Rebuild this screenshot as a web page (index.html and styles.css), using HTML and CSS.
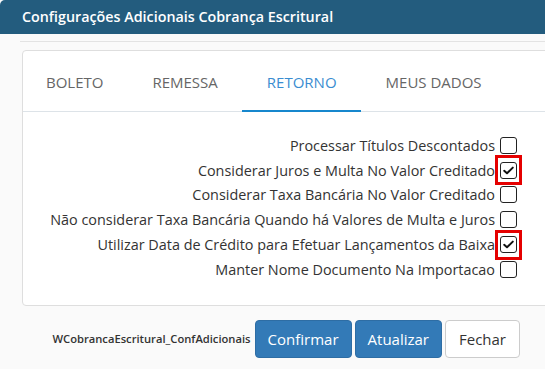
FILE: index.html
```html
<!DOCTYPE html>
<html lang="pt-BR">
<head>
    <meta charset="UTF-8">
    <meta name="viewport" content="width=device-width, initial-scale=1.0">
    <title>Configurações Adicionais Cobrança Escritural</title>
    <link rel="stylesheet" href="styles.css">
</head>
<body>

<div class="modal">
    <div class="modal-header">Configurações Adicionais Cobrança Escritural</div>

    <div class="modal-body">
        <div class="card">
            <ul class="tabs">
                <li>BOLETO</li>
                <li>REMESSA</li>
                <li class="active">RETORNO</li>
                <li>MEUS DADOS</li>
            </ul>

            <div class="options">
                <label class="option">
                    <span>Processar Títulos Descontados</span>
                    <span class="box"></span>
                </label>
                <label class="option">
                    <span>Considerar Juros e Multa No Valor Creditado</span>
                    <span class="box marked">
                        <svg viewBox="0 0 15 15" width="15" height="15"><path d="M3.2 7.8 L6 10.3 L11.8 4.6" fill="none" stroke="#111" stroke-width="2" stroke-linecap="round" stroke-linejoin="round"/></svg>
                    </span>
                </label>
                <label class="option">
                    <span>Considerar Taxa Bancária No Valor Creditado</span>
                    <span class="box"></span>
                </label>
                <label class="option">
                    <span>Não considerar Taxa Bancária Quando há Valores de Multa e Juros</span>
                    <span class="box"></span>
                </label>
                <label class="option">
                    <span>Utilizar Data de Crédito para Efetuar Lançamentos da Baixa</span>
                    <span class="box marked">
                        <svg viewBox="0 0 15 15" width="15" height="15"><path d="M3.2 7.8 L6 10.3 L11.8 4.6" fill="none" stroke="#111" stroke-width="2" stroke-linecap="round" stroke-linejoin="round"/></svg>
                    </span>
                </label>
                <label class="option">
                    <span>Manter Nome Documento Na Importacao</span>
                    <span class="box"></span>
                </label>
            </div>
        </div>
    </div>

    <div class="modal-footer">
        <span class="form-name">WCobrancaEscritural_ConfAdicionais</span>
        <button class="btn btn-primary">Confirmar</button>
        <button class="btn btn-primary">Atualizar</button>
        <button class="btn btn-default">Fechar</button>
    </div>
</div>

</body>
</html>
```

FILE: styles.css
```css
/* Estilos básicos */
html, body {
    margin: 0;
    overflow: hidden;
}
body {
    font-family: "Open Sans", "Noto Sans", sans-serif;
    background-color: #fafafa;
    color: #333;
}
.modal {
    width: 545px;
    height: 369px;
    background-color: #fafafa;
}
.modal-header {
    height: 34px;
    line-height: 33px;
    padding-left: 22px;
    background-color: #235c7e;
    color: #fff;
    font-size: 14.3px;
    font-weight: 600;
    border-top-left-radius: 5px;
    white-space: nowrap;
}
.modal-body {
    margin-top: 7px;
    margin-left: 20px;
    border-top: 1px solid #e3e3e3;
    padding-top: 8px;
    padding-left: 2px;
}
.card {
    width: 560px;
    background-color: #fff;
    border: 1px solid #dedede;
    border-radius: 4px;
}
.tabs {
    display: flex;
    list-style: none;
    margin: 0;
    padding: 0;
    height: 60px;
    border-bottom: 1px solid #dde3e8;
}
.tabs li {
    padding: 0 24.5px;
    line-height: 62px;
    font-size: 15px;
    color: #666;
    white-space: nowrap;
}
.tabs li:first-child {
    padding-left: 23px;
}
.tabs li.active {
    color: #3a8dd1;
    border-bottom: 2px solid #1687cd;
    margin-bottom: -1px;
}
.options {
    display: flex;
    flex-direction: column;
    align-items: flex-end;
    padding: 21px 66px 23px 0;
}
.option {
    display: flex;
    align-items: center;
    gap: 5px;
    height: 24.8px;
    font-size: 14.4px;
    color: #333;
    white-space: nowrap;
}
.box {
    position: relative;
    display: flex;
    align-items: center;
    justify-content: center;
    width: 15px;
    height: 15px;
    border: 1.5px solid #222;
    border-radius: 3px;
    background-color: #fff;
}
.box.marked::after {
    content: "";
    position: absolute;
    top: -7.5px;
    bottom: -7.5px;
    left: -6px;
    right: -6px;
    border: 3px solid #e50000;
}
.modal-footer {
    display: flex;
    align-items: center;
    justify-content: flex-end;
    gap: 3px;
    padding: 14px 25px 0 0;
}
.form-name {
    font-size: 11.2px;
    font-weight: 600;
    color: #333;
    margin-right: 1px;
    white-space: nowrap;
}
.btn {
    height: 38px;
    padding: 0 12px;
    font-family: "Open Sans", "Noto Sans", sans-serif;
    font-size: 15px;
    border-radius: 4px;
    cursor: pointer;
}
.btn-primary {
    background-color: #337ab7;
    color: #fff;
    border: 1px solid #2e6da4;
}
.btn-default {
    background-color: #fff;
    color: #333;
    border: 1px solid #ccc;
    padding: 0 13px;
}
```
